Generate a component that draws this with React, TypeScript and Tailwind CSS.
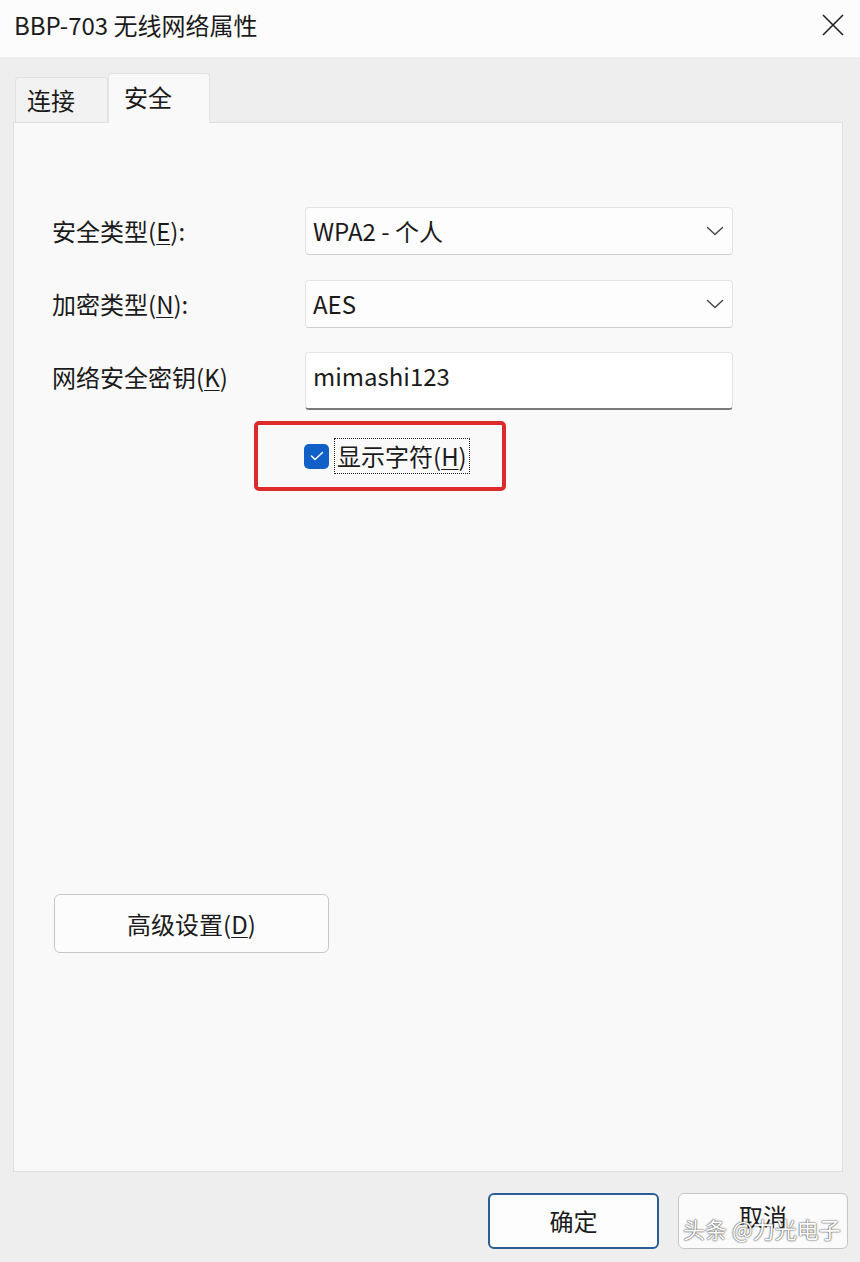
import React from "react";

const font = "font-['Noto_Sans_CJK_SC','Noto_Sans',sans-serif]";

function Chevron() {
  return (
    <svg width="18" height="10" viewBox="0 0 18 10" fill="none">
      <path d="M1.5 1.5 L9 8.5 L16.5 1.5" stroke="#444" strokeWidth="1.4" strokeLinecap="round" strokeLinejoin="round" />
    </svg>
  );
}

function Key({ k }: { k: string }) {
  return (
    <>
      (<span className="underline underline-offset-[3px] decoration-1">{k}</span>)
    </>
  );
}

function Select({ value }: { value: string }) {
  return (
    <div className="flex h-[48px] w-[428px] items-center justify-between rounded-[4px] border border-[#e3e3e3] border-b-[#cdcdcd] bg-[#fdfdfd] pl-[7px] pr-[8px]">
      <span className="text-[24px] leading-[28px] text-[#1b1b1b]">{value}</span>
      <Chevron />
    </div>
  );
}

export default function App() {
  return (
    <div className={`${font} relative flex h-[1262px] w-[860px] flex-col overflow-hidden bg-[#eeeeee] text-[#1b1b1b]`}>
      {/* title bar */}
      <div className="flex h-[57px] shrink-0 items-center justify-between bg-[#fcfcfc] pb-[8px] pl-[14px] pr-[15px]">
        <span className="text-[24px] leading-[28px]">BBP-703 无线网络属性</span>
        <svg width="24" height="24" viewBox="0 0 24 24" fill="none">
          <path d="M2 2 L22 22 M22 2 L2 22" stroke="#222" strokeWidth="1.6" />
        </svg>
      </div>

      {/* tabs + panel */}
      <div className="pl-[13px] pr-[17px] pt-[16px]">
        <div className="flex h-[49px] items-end">
          <div className="ml-[2px] flex h-[45px] w-[93px] items-center rounded-t-[4px] border border-b-0 border-[#e2e2e2] bg-[#f2f2f2] pl-[11px] text-[24px] leading-[28px]">
            连接
          </div>
          <div className="relative z-10 -mb-px flex h-[50px] w-[102px] items-center rounded-t-[4px] border border-b-0 border-[#e2e2e2] bg-[#f9f9f9] pl-[15px] pb-[4px] text-[24px] leading-[28px]">
            安全
          </div>
        </div>
        <div className="flex h-[1050px] flex-col border border-[#dfdfdf] bg-[#f9f9f9] pl-[38px] pt-[84px]">
          <div className="flex items-center">
            <span className="w-[253px] text-[24px] leading-[28px]">
              安全类型<Key k="E" />:
            </span>
            <Select value="WPA2 - 个人" />
          </div>
          <div className="mt-[25px] flex items-center">
            <span className="w-[253px] text-[24px] leading-[28px]">
              加密类型<Key k="N" />:
            </span>
            <Select value="AES" />
          </div>
          <div className="mt-[24px] flex items-start">
            <span className="w-[253px] pt-[11px] text-[24px] leading-[28px]">
              网络安全密钥<Key k="K" />
            </span>
            <div className="h-[58px] w-[428px] rounded-[4px] border border-[#e3e3e3] border-b-2 border-b-[#7a7a7a] bg-white pl-[7px] pt-[9px] text-[24px] leading-[28px]">
              mimashi123
            </div>
          </div>

          <div className="ml-[202px] mt-[11px] flex h-[70px] w-[252px] items-center rounded-[5px] border-4 border-[#dd2a2a] pl-[46px]">
            <div className="flex h-[25px] w-[25px] items-center justify-center rounded-[5px] bg-[#1160c8]">
              <svg width="14" height="10" viewBox="0 0 14 10" fill="none">
                <path d="M1.5 5 L5 8.5 L12.5 1.5" stroke="white" strokeWidth="1.5" strokeLinecap="round" strokeLinejoin="round" />
              </svg>
            </div>
            <div className="ml-[5px] flex h-[36px] items-center border border-dotted border-[#222] px-[2px] text-[24px] leading-[28px]">
              显示字符<Key k="H" />
            </div>
          </div>

          <button className="ml-[2px] mt-[403px] flex h-[59px] w-[275px] items-center justify-center rounded-[6px] border border-[#c6c6c6] bg-[#fcfcfc] text-[24px] leading-[28px]">
            高级设置<Key k="D" />
          </button>
        </div>
      </div>

      {/* bottom buttons */}
      <div className="mt-[21px] flex justify-end gap-[19px] pr-[12px]">
        <button className="flex h-[56px] w-[171px] items-center justify-center rounded-[6px] border-2 border-[#2a5e93] bg-[#fdfdfd] text-[24px] leading-[28px]">
          确定
        </button>
        <button className="flex h-[56px] w-[170px] items-center justify-center rounded-[6px] border border-[#c6c6c6] bg-[#fbfbfb] pb-[10px] text-[24px] leading-[28px]">
          取消
        </button>
      </div>

      {/* watermark */}
      <div className="absolute left-[683px] top-[1214px] text-[22px] leading-[28px] text-white [text-shadow:0_0_2px_#444,0_0_1px_#444]">
        头条 @力光电子
      </div>
    </div>
  );
}
